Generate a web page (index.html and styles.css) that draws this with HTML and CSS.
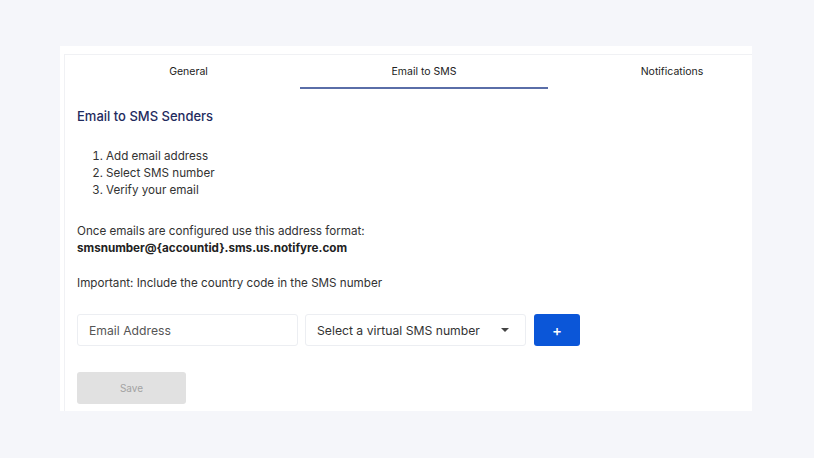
FILE: index.html
```html
<!DOCTYPE html>
<html>
<head>
<meta charset="utf-8">
<link rel="stylesheet" href="styles.css">
</head>
<body>
<div class="page">
  <div class="card">
    <div class="inner">
      <div class="tabs">
        <div class="tab tab-first">General</div>
        <div class="tab active">Email to SMS</div>
        <div class="tab">Notifications</div>
      </div>
      <div class="content">
        <h2 class="title">Email to SMS Senders</h2>
        <ol class="steps">
          <li>Add email address</li>
          <li>Select SMS number</li>
          <li>Verify your email</li>
        </ol>
        <p class="para">Once emails are configured use this address format:<br><strong>smsnumber@{accountid}.sms.us.notifyre.com</strong></p>
        <p class="para para-note">Important: Include the country code in the SMS number</p>
        <div class="form-row">
          <div class="field">Email Address</div>
          <div class="field select"><span>Select a virtual SMS number</span><span class="caret"></span></div>
          <button class="add">+</button>
        </div>
        <button class="save">Save</button>
      </div>
    </div>
  </div>
</div>
</body>
</html>
```
FILE: styles.css
```css
html, body {
  margin: 0;
  padding: 0;
  background: #f5f6fa;
  font-family: Inter, "Noto Sans", sans-serif;
}
.page {
  width: 814px;
  height: 458px;
  padding: 46px 62px 0 60px;
  box-sizing: border-box;
}
.card {
  background: #fff;
  width: 692px;
  height: 365px;
  padding: 8px 0 0 4px;
  box-sizing: border-box;
  overflow: hidden;
}
.inner {
  border-top: 1px solid #f0f1f4;
  border-left: 1px solid #f0f1f4;
  height: 100%;
  box-sizing: border-box;
}
.tabs {
  display: flex;
  padding-left: 12px;
  height: 34px;
  width: 760px;
}
.tab {
  width: 248px;
  flex: none;
  text-align: center;
  font-size: 10.5px;
  color: #222;
  padding-top: 10px;
  box-sizing: border-box;
}
.tab-first {
  width: 223px;
}
.tab.active {
  border-bottom: 2px solid #5a6ea8;
}
.content {
  padding: 0 0 0 12px;
}
.title {
  margin: 19px 0 0;
  font-size: 13px;
  font-weight: 500;
  color: #1f2b5e;
  line-height: 16px;
}
.steps {
  margin: 24px 0 0;
  padding-left: 29px;
  font-size: 11.65px;
  line-height: 17px;
  color: #333;
}
.para {
  margin: 24px 0 0;
  font-size: 11.65px;
  line-height: 17px;
  color: #333;
}
.para-note {
  margin-top: 18px;
}
.para strong {
  color: #222;
  font-weight: 700;
}
.form-row {
  display: flex;
  gap: 7px;
  margin-top: 22px;
}
.field {
  width: 221px;
  height: 32px;
  box-sizing: border-box;
  border: 1px solid #eceef2;
  border-radius: 3px;
  padding: 0 11px;
  display: flex;
  align-items: center;
  font-size: 12.2px;
  color: #555;
}
.select {
  color: #333;
  justify-content: space-between;
}
.caret {
  width: 0;
  height: 0;
  border-left: 4px solid transparent;
  border-right: 4px solid transparent;
  border-top: 4px solid #444;
  margin-right: 5px;
}
.add {
  margin-left: 1px;
  width: 46px;
  height: 32px;
  border: none;
  border-radius: 3px;
  background: #0b56d8;
  color: #fff;
  font-size: 15px;
  font-weight: 500;
  font-family: inherit;
  padding: 0;
}
.save {
  margin-top: 26px;
  width: 109px;
  height: 32px;
  border: none;
  border-radius: 3px;
  background: #e1e1e1;
  color: #a3a3a3;
  font-size: 10px;
  font-family: inherit;
  padding: 0;
  display: block;
}
```
